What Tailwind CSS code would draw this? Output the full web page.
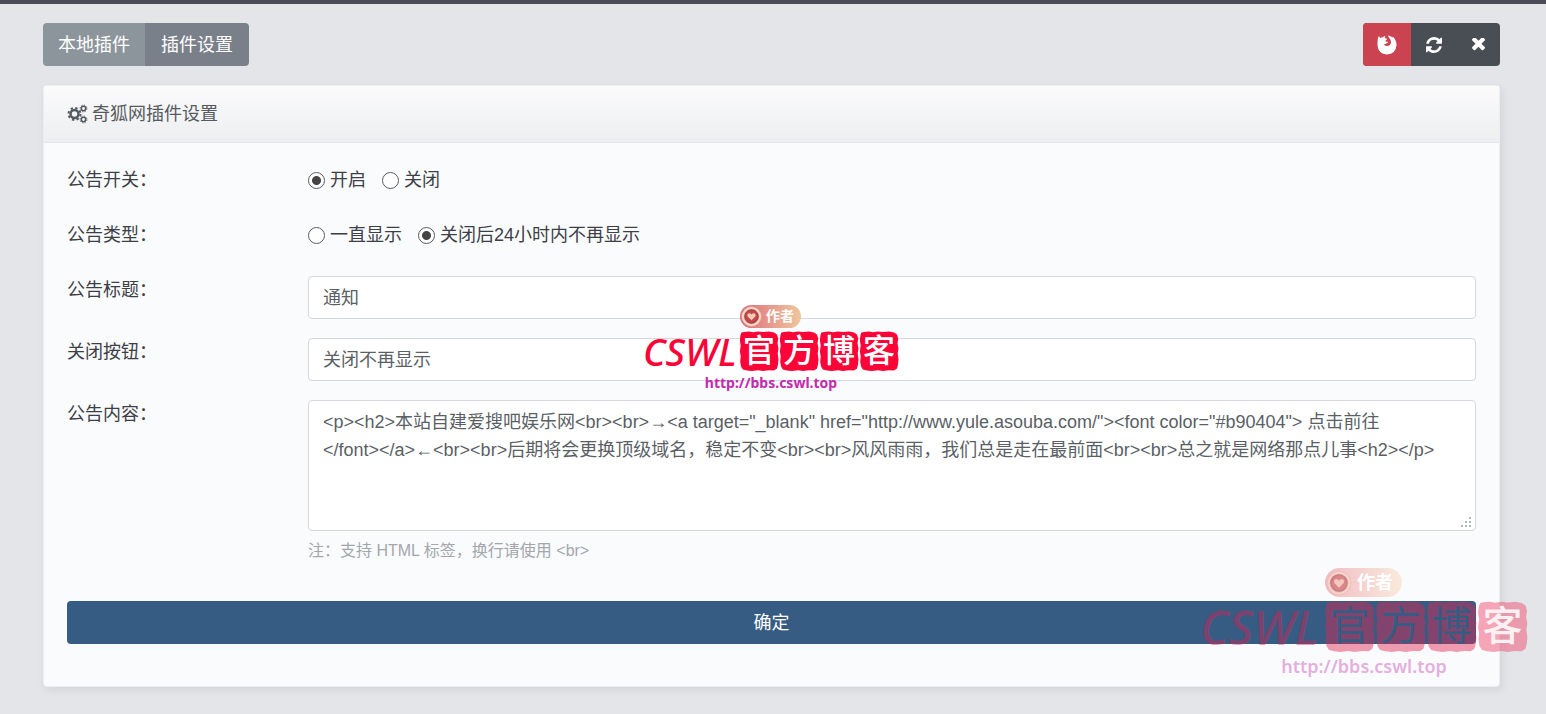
<!DOCTYPE html>
<html lang="zh-CN">
<head>
  <meta charset="UTF-8">
  <meta name="viewport" content="width=device-width, initial-scale=1.0">
  <title>插件设置</title>
  <script src="https://cdn.jsdelivr.net/npm/@tailwindcss/browser@4"></script>
</head>
<body class="relative min-h-screen overflow-x-hidden bg-[#e3e5e9] border-t-4 border-[#4a4b57] font-['Liberation_Sans','Noto_Sans_CJK_SC',sans-serif] text-lg text-[#3c4046]">

  <svg class="hidden">
    <symbol id="seal" viewBox="0 0 40 40" preserveAspectRatio="none">
      <path d="M5 1l5-.5 4 .8 5-.8 5 .6 6-.6 5 1 3 2 1.200 4-.7 5 1 5-.8 5 .8 6-.5 5-1 4-3 2-5-.3-6 .8-5-.8-6 .8-5-.5-4-1-2-3-.8-5 .5-5-.8-5 .8-6-.8-5 .5-5 1-3z" fill="currentColor"/>
    </symbol>
    <symbol id="medal" viewBox="0 0 24 24">
      <circle cx="12" cy="12" r="10.500" fill="#f3b39d"/>
      <circle cx="12" cy="12" r="9" fill="none" stroke="#fbe3d4" stroke-width="1.500"/>
      <circle cx="12" cy="12" r="7" fill="#c6474d" stroke="#8f3a3c" stroke-width="1"/>
      <path d="M12 16l-4-4q-1-3 1.500-3.500 1.500 0 2.500 1.500 1-1.500 2.500-1.500 2.500.5 1.500 3.500z" fill="#f7cdb2"/>
    </symbol>
  </svg>

  <header class="flex items-center justify-between py-[19px] pr-[46px] pl-[43px]">
    <nav class="flex overflow-hidden rounded text-white">
      <a href="#" class="flex h-[43px] items-center bg-[#8c959c] px-[15px]">本地插件</a>
      <a href="#" class="flex h-[43px] items-center bg-[#7a808a] px-4">插件设置</a>
    </nav>
    <div class="flex overflow-hidden rounded bg-[#494d54] text-white">
      <button type="button" aria-label="浏览器" class="flex h-[43px] w-12 items-center justify-center bg-[#cb4251]">
        <svg class="size-5" viewBox="0 0 20 20" fill="currentColor">
          <path d="M1 3l.8-2 1.500 2q1.200-.8 2.700-.7 1-1.300 2.500-1.500-.9 1-.7 2 .8 1 2.300 1-.1 1.200-1.600 1.700l.2 1.200q1.400-.6 2.400.4-.4 1.400-2 1.500-1.200 1-2.600.5 1.100 1.900 3.500 1.900 3.500-.2 4-3.500.2-2.600-2.200-5.300Q10.800 1.300 11 .5q3 .3 4.600 2.300l.1-1.200Q19.500 5 19.500 10.300 18.800 19 10 19.500 1.200 19 .5 10.500.3 6 1 3z"/>
        </svg>
      </button>
      <button type="button" aria-label="刷新" class="flex h-[43px] w-[45px] items-center justify-center">
        <svg class="size-4" viewBox="0 0 1536 1536" fill="currentColor">
          <path d="M1511 928q0 5-1 7-64 268-268 434.500t-478 166.500q-146 0-282.500-55t-243.500-157l-129 129q-19 19-45 19t-45-19-19-45v-448q0-26 19-45t45-19h448q26 0 45 19t19 45-19 45l-137 137q71 66 161 102t187 36q134 0 250-65t186-179q11-17 53-117 8-23 30-23h192q13 0 22.500 9.500t9.500 22.500zm25-800v448q0 26-19 45t-45 19h-448q-26 0-45-19t-19-45 19-45l138-138q-148-137-349-137-134 0-250 65t-186 179q-11 17-53 117-8 23-30 23h-199q-13 0-22.500-9.500t-9.500-22.500v-7q65-268 270-434.500t480-166.500q146 0 284 55.500t245 156.500l130-129q19-19 45-19t45 19 19 45z"/>
        </svg>
      </button>
      <button type="button" aria-label="关闭" class="flex h-[43px] w-11 items-center justify-center">
        <svg class="size-[13px]" viewBox="110 434 1188 1188" fill="currentColor">
          <path d="M1298 1322q0 40-28 68l-136 136q-28 28-68 28t-68-28l-294-294-294 294q-28 28-68 28t-68-28l-136-136q-28-28-28-68t28-68l294-294-294-294q-28-28-28-68t28-68l136-136q28-28 68-28t68 28l294 294 294-294q28-28 68-28t68 28l136 136q28 28 28 68t-28 68l-294 294 294 294q28 28 28 68z"/>
        </svg>
      </button>
    </div>
  </header>

  <main class="mr-[46px] mb-6 ml-[43px] rounded-sm border border-[#eceef0] bg-[#fafbfd] shadow-[2px_3px_8px_rgba(0,0,0,0.08)]">
    <h1 class="flex h-[57px] items-center gap-1 border-b border-[#e3e5e8] bg-linear-to-b from-[#fbfbfc] to-[#edeef0] px-[23px] text-[#555a61]">
      <svg class="h-5 w-[21px]" viewBox="0 0 21 20" fill="none" stroke="currentColor">
        <circle cx="7.500" cy="10" r="4" stroke-width="2.500"/>
        <circle cx="7.500" cy="10" r="6" stroke-width="2" stroke-dasharray="2.360 2.360"/>
        <circle cx="16.500" cy="4.500" r="2.200" stroke-width="1.500"/>
        <circle cx="16.500" cy="4.500" r="3.400" stroke-width="1" stroke-dasharray="1.330 1.330"/>
        <circle cx="16.500" cy="15.500" r="2.200" stroke-width="1.500"/>
        <circle cx="16.500" cy="15.500" r="3.400" stroke-width="1" stroke-dasharray="1.330 1.330"/>
      </svg>
      奇狐网插件设置
    </h1>

    <form class="flex flex-col px-[23px] pt-[23px] pb-[42px]">
      <fieldset class="mb-[27px] flex h-7 items-center">
        <legend class="float-left w-[241px]">公告开关：</legend>
        <label class="mr-4 flex items-center gap-[5px]">
          <input type="radio" name="switch" checked class="size-[17px] appearance-none rounded-full border border-[#5a5a5a] bg-white checked:bg-[radial-gradient(circle,#444_4px,#fff_5px)]">开启
        </label>
        <label class="flex items-center gap-[5px]">
          <input type="radio" name="switch" class="size-[17px] appearance-none rounded-full border border-[#5a5a5a] bg-white checked:bg-[radial-gradient(circle,#444_4px,#fff_5px)]">关闭
        </label>
      </fieldset>

      <fieldset class="mb-[27px] flex h-7 items-center">
        <legend class="float-left w-[241px]">公告类型：</legend>
        <label class="mr-4 flex items-center gap-[5px]">
          <input type="radio" name="type" class="size-[17px] appearance-none rounded-full border border-[#5a5a5a] bg-white checked:bg-[radial-gradient(circle,#444_4px,#fff_5px)]">一直显示
        </label>
        <label class="flex items-center gap-[5px]">
          <input type="radio" name="type" checked class="size-[17px] appearance-none rounded-full border border-[#5a5a5a] bg-white checked:bg-[radial-gradient(circle,#444_4px,#fff_5px)]">关闭后24小时内不再显示
        </label>
      </fieldset>

      <div class="mb-[19px] flex">
        <label for="title" class="w-[241px] shrink-0">公告标题：</label>
        <input id="title" type="text" value="通知" class="h-[43px] min-w-0 flex-1 rounded border border-[#d5d9dd] bg-white px-[14px] pb-[3px] text-[#5a5f66]">
      </div>

      <div class="mb-[19px] flex">
        <label for="close" class="w-[241px] shrink-0">关闭按钮：</label>
        <input id="close" type="text" value="关闭不再显示" class="h-[43px] min-w-0 flex-1 rounded border border-[#d5d9dd] bg-white px-[14px] pb-[3px] text-[#5a5f66]">
      </div>

      <div class="flex">
        <label for="content" class="w-[241px] shrink-0">公告内容：</label>
        <div class="min-w-0 flex-1">
          <div class="relative">
            <textarea id="content" class="block h-[131px] w-full resize-none rounded border border-[#d5d9dd] bg-white px-[14px] py-[7px] leading-7 text-[#5a5f66]">&lt;p&gt;&lt;h2&gt;本站自建爱搜吧娱乐网&lt;br&gt;&lt;br&gt;→&lt;a target="_blank" href="http://www.yule.asouba.com/"&gt;&lt;font color="#b90404"&gt; 点击前往
&lt;/font&gt;&lt;/a&gt;←&lt;br&gt;&lt;br&gt;后期将会更换顶级域名，稳定不变&lt;br&gt;&lt;br&gt;风风雨雨，我们总是走在最前面&lt;br&gt;&lt;br&gt;总之就是网络那点儿事&lt;h2&gt;&lt;/p&gt;</textarea>
            <svg class="pointer-events-none absolute right-1 bottom-[3px] size-3" viewBox="0 0 12 12" fill="#b4b7ba">
              <path d="M9 1h2v2H9zM9 5h2v2H9zM5 5h2v2H5zM9 9h2v2H9zM5 9h2v2H5zM1 9h2v2H1z"/>
            </svg>
          </div>
          <p class="mt-2 text-base leading-6 text-[#a3a7ac]">注：支持 HTML 标签，换行请使用 &lt;br&gt;</p>
        </div>
      </div>

      <button type="submit" class="mt-[38px] h-[43px] w-full rounded bg-[#365c83] text-white">确定</button>
    </form>
  </main>

  <!-- watermark, centre -->
  <div class="pointer-events-none absolute top-[301px] left-1/2 -ml-[130px] flex w-64 flex-col items-center">
    <div class="ml-[97px] flex h-[23px] w-[61px] items-center self-start rounded-full bg-linear-to-r from-[#dc6a7d] to-[#edc79d] text-[14px] font-bold text-white">
      <svg class="mr-[3px] size-[23px]"><use href="#medal"/></svg>作者
    </div>
    <div class="mt-[3px] flex h-10 w-full items-center justify-between text-[#fb0437]">
      <span class="font-['Noto_Sans'] text-[38px] leading-10 font-medium italic">CSWL</span>
      <div class="flex text-[32px] leading-10 font-medium text-white">
        <span class="relative flex size-10 items-center justify-center"><svg class="absolute inset-0 size-full text-[#fb0437]"><use href="#seal"/></svg><span class="relative">官</span></span>
        <span class="relative flex size-10 items-center justify-center"><svg class="absolute inset-0 size-full text-[#fb0437]"><use href="#seal"/></svg><span class="relative">方</span></span>
        <span class="relative flex size-10 items-center justify-center"><svg class="absolute inset-0 size-full text-[#fb0437]"><use href="#seal"/></svg><span class="relative">博</span></span>
        <span class="relative flex size-10 items-center justify-center"><svg class="absolute inset-0 size-full text-[#fb0437]"><use href="#seal"/></svg><span class="relative">客</span></span>
      </div>
    </div>
    <span class="font-['Noto_Sans'] text-[14px] leading-6 font-bold text-[#c42aae]">http://bbs.cswl.top</span>
  </div>

  <!-- watermark, bottom right -->
  <div class="pointer-events-none absolute top-[564px] right-[18px] flex w-[328px] flex-col items-center">
    <div class="ml-[125px] flex h-[29px] w-[77px] items-center self-start rounded-full bg-linear-to-r from-[#f0bcc5] to-[#f9eadb] text-[18px] font-bold text-white">
      <svg class="mr-1 size-7 opacity-50"><use href="#medal"/></svg>作者
    </div>
    <div class="mt-1 flex h-[51px] w-full items-center justify-between">
      <span class="font-['Noto_Sans'] text-[48px] leading-[51px] font-medium text-[#d81f52]/45 italic">CSWL</span>
      <div class="flex text-[40px] leading-[51px] text-[#365c83]">
        <span class="relative flex size-[51px] items-center justify-center"><svg class="absolute inset-0 size-full text-[#e0264f]/45"><use href="#seal"/></svg><span class="relative">官</span></span>
        <span class="relative flex size-[51px] items-center justify-center"><svg class="absolute inset-0 size-full text-[#e0264f]/45"><use href="#seal"/></svg><span class="relative">方</span></span>
        <span class="relative flex size-[51px] items-center justify-center"><svg class="absolute inset-0 size-full text-[#e0264f]/45"><use href="#seal"/></svg><span class="relative">博</span></span>
        <span class="relative flex size-[51px] items-center justify-center"><svg class="absolute inset-0 size-full text-[#f0506f]/50"><use href="#seal"/></svg><span class="relative font-medium text-[#fbf0f3]">客</span></span>
      </div>
    </div>
    <span class="font-['Noto_Sans'] text-[18px] leading-7 font-semibold text-[#e3b0de]">http://bbs.cswl.top</span>
  </div>

</body>
</html>
